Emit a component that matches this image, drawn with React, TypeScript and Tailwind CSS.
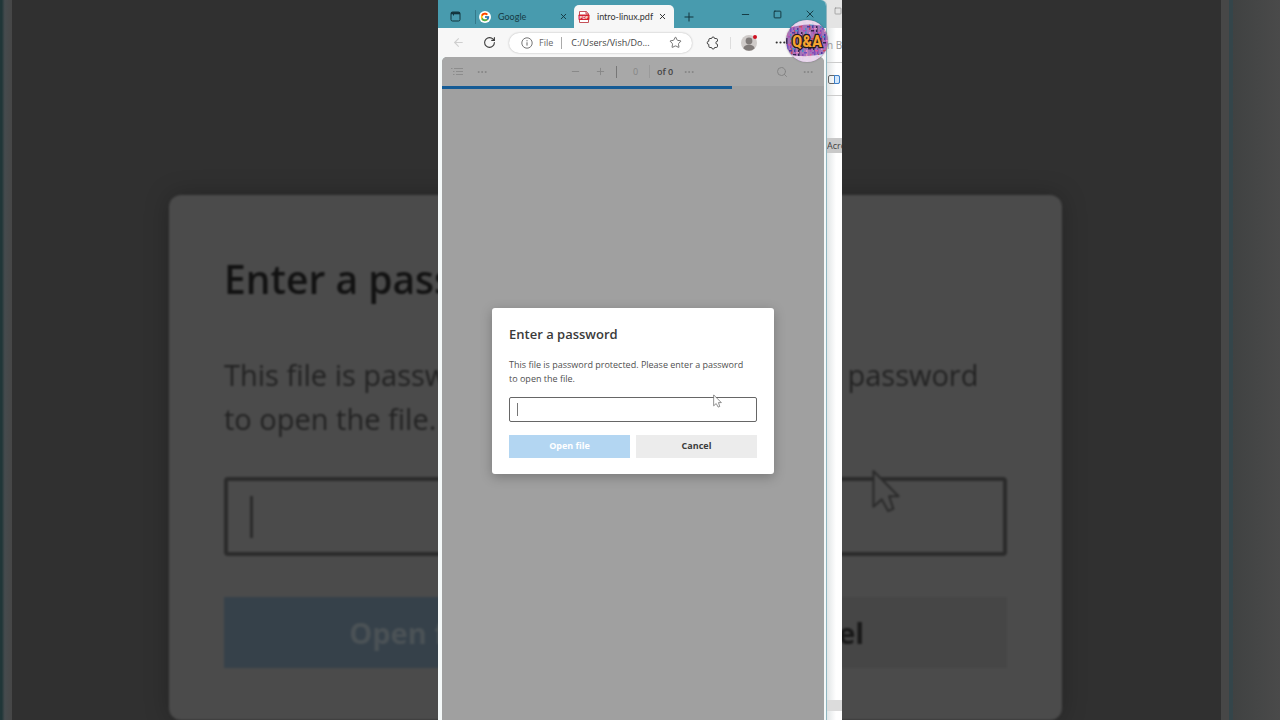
import { ArrowLeft, Minus, MoreHorizontal, Plus, RotateCw, Search, Square, Star, X } from "lucide-react";
import { FcGoogle } from "react-icons/fc";
import clsx from "clsx";

interface PasswordDialogProps {
  large?: boolean;
}

function Pointer({ className }: { className: string }) {
  return (
    <svg className={className} viewBox="0 0 14 21" fill="currentColor" stroke="#555" aria-hidden="true">
      <path d="M1 1 L1 18 L5 14.5 L8 20 L10.5 19 L8.5 13 L13 13 Z" strokeLinejoin="round" />
    </svg>
  );
}

function PasswordDialog({ large = false }: PasswordDialogProps) {
  const id = large ? "password-large" : "password";

  return (
    <form
      className={clsx(
        "w-full",
        large
          ? "rounded-xl bg-[#4b4b4b] px-[55px] pt-14 pb-[52px] shadow-[0_0_24px_rgba(0,0,0,0.25)] blur-[1px]"
          : "rounded-[3px] bg-white px-[17px] pt-[17px] pb-4 shadow-[0_3px_12px_rgba(0,0,0,0.25)]",
      )}
    >
      <h2
        className={clsx(
          "font-semibold whitespace-nowrap",
          large ? "text-[39px] leading-[56px] text-[#121212]" : "text-[13px] leading-[18px] text-[#3a3a3a]",
        )}
      >
        Enter a password
      </h2>
      <label
        htmlFor={id}
        className={clsx(
          "block whitespace-nowrap",
          large ? "mt-[46px] text-[29px] leading-[44px] text-[#222]" : "mt-[15px] text-[9px] leading-[14px] text-[#505050]",
        )}
      >
        This file is password protected. Please enter a password
        <br />
        to open the file.
      </label>
      <div
        className={clsx(
          "relative flex items-center",
          large
            ? "mt-9 h-[79px] rounded-[4px] border-4 border-[#2b2b2b] pl-[22px]"
            : "mt-[11px] h-[25px] rounded-[2px] border border-[#666] pl-[7px]",
        )}
      >
        <span className={large ? "h-[42px] w-[3px] bg-[#2b2b2b]" : "h-[13px] w-px bg-[#777]"} />
        <input id={id} type="password" className="h-full min-w-0 flex-1 bg-transparent outline-none" />
        {/* Mouse pointer over the field */}
        <Pointer
          className={
            large
              ? "absolute -top-3 right-[102px] h-[44px] w-[30px] text-[#4b4b4b] [stroke:#2b2b2b]"
              : "absolute -top-1 right-[34px] h-[14px] w-[9px] text-white"
          }
        />
      </div>
      <div
        className={clsx(
          "grid grid-cols-2 font-bold",
          large ? "mt-[41px] gap-5 text-[29px]" : "mt-[13px] gap-1.5 text-[9px]",
        )}
      >
        <button
          type="submit"
          className={large ? "h-[71px] bg-[#36414a] text-[#4b5256]" : "h-[23px] bg-[#b3d6f2] text-white"}
        >
          Open file
        </button>
        <button
          type="button"
          className={large ? "h-[71px] bg-[#464646] text-[#181818]" : "h-[23px] bg-[#ececec] text-[#3c3c3c]"}
        >
          Cancel
        </button>
      </div>
    </form>
  );
}

function Backdrop() {
  return (
    <div className="col-start-1 row-start-1 flex h-full overflow-hidden" aria-hidden="true">
      <div className="w-3 bg-linear-to-r from-[#203638] from-15% via-[#464b4e] via-40% to-[#464646]" />
      <div className="flex flex-1 items-start bg-[#303030] pt-[195px] pr-[159px] pl-[157px]">
        <PasswordDialog large />
      </div>
      <div className="w-2 bg-[#474747]" />
      <div className="w-1 bg-[#34454a]" />
      <div className="w-[47px] bg-linear-to-r from-[#404242] to-[#4a4a4a]" />
    </div>
  );
}

function TabMenuIcon() {
  return (
    <svg className="size-[11px]" viewBox="0 0 11 11" fill="none" stroke="#12343c" aria-hidden="true">
      <rect x="1" y="1" width="9" height="9" rx="1.5" />
      <path d="M1 2.2h9" strokeWidth="2.2" />
      <path d="M3.5 3v1.5" />
    </svg>
  );
}

function PdfIcon() {
  return (
    <svg className="size-3 shrink-0" viewBox="0 0 12 12" aria-hidden="true">
      <path d="M1.5.5h7L10.5 3v8.5h-9z" fill="#fff" stroke="#c5525a" />
      <path d="M8 .5V3h2.5" fill="none" stroke="#c5424a" />
      <rect x=".5" y="3.5" width="11" height="5.5" rx=".7" fill="#d4232f" />
      <text x="6" y="7.9" textAnchor="middle" fontSize="4.5" fontWeight="700" fill="#fff">
        PDF
      </text>
    </svg>
  );
}

function TitleBar() {
  return (
    <header className="flex h-7 items-end bg-[#489bae] pr-2.5 pl-3 font-['Lato','Open_Sans',sans-serif] text-[9px]">
      <button type="button" aria-label="Tab actions" className="flex h-[23px] items-center">
        <TabMenuIcon />
      </button>
      <div className="ml-3.5 flex h-[23px] w-[93px] items-center">
        <span className="h-3.5 w-px bg-[#34798a]" />
        <span className="ml-[3px] flex size-3 items-center justify-center rounded-full bg-white">
          <FcGoogle className="size-2.5" />
        </span>
        <span className="ml-[7px] text-[#163a43]">Google</span>
        <button type="button" aria-label="Close Google tab" className="ml-auto">
          <X className="size-[9px] text-[#12343c]" strokeWidth={2.4} />
        </button>
      </div>
      <div className="ml-1.5 flex h-[23px] w-[100px] items-center rounded-t-[5px] bg-[#f7f7f7] pr-[7px] pl-1">
        <PdfIcon />
        <span className="ml-[7px] whitespace-nowrap text-[#333]">intro-linux.pdf</span>
        <button type="button" aria-label="Close intro-linux.pdf tab" className="ml-auto">
          <X className="size-[9px] text-[#222]" strokeWidth={2.4} />
        </button>
      </div>
      <button type="button" aria-label="New tab" className="ml-2 flex h-[23px] items-center">
        <Plus className="size-3.5 text-[#12343c]" strokeWidth={1.7} />
      </button>
      <div className="ml-auto flex h-7 items-center gap-[22px] text-[#12343c]">
        <button type="button" aria-label="Minimize">
          <Minus className="size-[11px]" strokeWidth={2} />
        </button>
        <button type="button" aria-label="Maximize">
          <Square className="size-[9px]" strokeWidth={2.5} />
        </button>
        <button type="button" aria-label="Close">
          <X className="size-3" strokeWidth={1.8} />
        </button>
      </div>
    </header>
  );
}

function AddressBar() {
  return (
    <nav className="flex h-[29px] items-center bg-[#f7f7f7] pr-[39px] pl-3.5">
      <button type="button" aria-label="Back">
        <ArrowLeft className="size-[13px] text-[#cfcfcf]" strokeWidth={2} />
      </button>
      <button type="button" aria-label="Refresh" className="ml-[18px]">
        <RotateCw className="size-[13px] text-[#3a3a3a]" strokeWidth={2} />
      </button>
      <div className="ml-[13px] flex h-5 w-[183px] items-center rounded-full bg-white pr-2.5 pl-3 text-[9px] text-[#444] shadow-[0_0_2px_rgba(0,0,0,0.3)]">
        <svg className="size-3" viewBox="0 0 12 12" fill="none" stroke="#666" aria-hidden="true">
          <circle cx="6" cy="6" r="5.2" strokeWidth=".9" />
          <path d="M6 5.3v3.3M6 3.2v1.1" />
        </svg>
        <span className="ml-1.5 text-[#666]">File</span>
        <span className="ml-2 h-3 w-px bg-[#aaa]" />
        <input
          aria-label="Address"
          readOnly
          value="C:/Users/Vish/Do..."
          className="ml-[9px] min-w-0 flex-1 bg-transparent outline-none"
        />
        <button type="button" aria-label="Add to favorites">
          <Star className="size-[13px] text-[#666]" strokeWidth={1.7} />
        </button>
      </div>
      <button type="button" aria-label="Extensions" className="ml-3.5">
        <svg className="size-3.5" viewBox="0 0 14 14" fill="none" stroke="#444" strokeLinejoin="round" aria-hidden="true">
          <path d="M4 2.5h1.6a1.5 1.5 0 0 1 3 0h1.6q1.3 0 1.3 1.3v1.4a1.6 1.6 0 0 0 0 3.2v1.8q0 1.3-1.3 1.3H8.6a1.5 1.5 0 0 1-3 0H4q-1.2 0-1.2-1.3V8.4a1.6 1.6 0 0 1 0-3.2V3.8Q2.8 2.5 4 2.5z" />
        </svg>
      </button>
      <span className="ml-2.5 h-3 w-px bg-[#ddd]" />
      <button type="button" aria-label="Profile" className="relative ml-2.5">
        <svg className="size-4" viewBox="0 0 16 16" aria-hidden="true">
          <circle cx="8" cy="8" r="8" fill="#cfcbc9" />
          <circle cx="8" cy="6" r="3.4" fill="#807b79" />
          <path d="M2.5 13.5c0-5 11-5 11 0a8 8 0 0 1-11 0z" fill="#807b79" />
        </svg>
        <span className="absolute top-0 right-0 size-1 rounded-full bg-[#cf1020]" />
      </button>
      <button type="button" aria-label="Settings and more" className="ml-auto">
        <MoreHorizontal className="size-[13px] text-[#333]" />
      </button>
    </nav>
  );
}

function PdfToolbar() {
  return (
    <div className="flex h-[29px] items-center pr-2.5 pl-[9px] text-[9px] text-[#858585]">
      <div className="flex items-center gap-[13px]">
        <button type="button" aria-label="Contents">
          <svg className="size-3" viewBox="0 0 12 12" fill="none" stroke="currentColor" strokeWidth=".8" aria-hidden="true">
            <path d="M0 2.5h1.5M3 2.5h9M2 5.5h1.5M5 5.5h7M2 8.5h1.5M5 8.5h7" />
          </svg>
        </button>
        <button type="button" aria-label="More tools">
          <MoreHorizontal className="size-3" />
        </button>
      </div>
      <div className="ml-[82px] flex items-center">
        <button type="button" aria-label="Zoom out">
          <Minus className="size-[11px]" />
        </button>
        <button type="button" aria-label="Zoom in" className="ml-3.5">
          <Plus className="size-[11px]" />
        </button>
        <span className="ml-2.5 h-3 w-px bg-[#777]" />
        <input
          aria-label="Page number"
          readOnly
          value="0"
          className="ml-[5px] w-7 border-r border-[#9a9a9a] bg-transparent text-center outline-none"
        />
        <span className="ml-[7px] font-semibold text-[#444]">of 0</span>
        <button type="button" aria-label="More page options" className="ml-2.5">
          <MoreHorizontal className="size-3" />
        </button>
      </div>
      <div className="ml-auto flex items-center gap-3.5">
        <button type="button" aria-label="Find">
          <Search className="size-3" />
        </button>
        <button type="button" aria-label="Settings">
          <MoreHorizontal className="size-3" />
        </button>
      </div>
    </div>
  );
}

function ChannelBadge() {
  const colors = ["#b04fb8", "#4b3aa0", "#d9559f", "#6f4fc0", "#35244f", "#4a8fc4", "#c24a62", "#8a49b5", "#e38ac0"];
  const blocks = Array.from({ length: 110 }, (_, i) => ({
    x: (i * 17 + Math.floor(i / 6) * 5) % 42,
    y: Math.floor(i / 6) * 2 + 2,
    width: i % 2 === 0 ? 1.5 : 3 + ((i * 5) % 5),
    height: i % 2 === 0 ? 6 : 1.5,
    fill: colors[(i * 7) % colors.length],
  }));

  return (
    <svg
      className="absolute top-5 right-3.5 size-[42px] rounded-full bg-[#a574b8] shadow-[0_0_2px_rgba(0,0,0,0.35)]"
      viewBox="0 0 42 42"
      role="img"
      aria-label="Q&A"
    >
      {blocks.map((block, i) => (
        <rect key={i} {...block} />
      ))}
      <path d="M0 0h42v7Q21 1 0 9zM0 34q21 5 42-1v9H0z" fill="#f4eaf5" fillOpacity=".85" />
      <text
        x="21"
        y="27"
        textAnchor="middle"
        className="font-['Roboto_Condensed','Roboto',sans-serif] text-[17px] font-bold"
        fill="#f5a331"
        stroke="#241a20"
        strokeWidth="2.5"
        paintOrder="stroke"
      >
        Q&amp;A
      </text>
    </svg>
  );
}

function BrowserWindow() {
  return (
    <section className="flex min-w-0 flex-1 flex-col overflow-hidden rounded-tr-md border-r border-[#8fb6c0] bg-[#f4f8f8]">
      <TitleBar />
      <AddressBar />
      <main className="mr-0.5 ml-1 flex flex-1 flex-col overflow-hidden rounded-t-[5px] bg-[#a0a0a0]">
        <div className="bg-[#a8a8a8]">
          <PdfToolbar />
          <div className="h-[3px] bg-[#a0a0a0]">
            <div className="h-full w-[76%] bg-[#155b95]" />
          </div>
        </div>
        <div className="flex flex-1 items-center px-[50px] pb-7">
          <PasswordDialog />
        </div>
      </main>
    </section>
  );
}

/* Sliver of the window that sits behind the browser */
function RearWindow() {
  return (
    <aside className="flex w-[15px] flex-col overflow-hidden bg-linear-to-r from-[#e2e6e7] to-white to-60% text-[9px] whitespace-nowrap">
      <div className="flex h-7 items-center bg-[#e4e4e4] pb-1.5 pl-[7px]">
        <Square className="size-2 shrink-0 text-[#888]" />
      </div>
      <div className="flex h-[35px] items-center border-b border-[#ccc] text-[10px] text-[#999]">n B</div>
      <div className="flex h-[33px] items-center border-b border-[#ccc] pl-px">
        <svg className="h-[9px] w-3 shrink-0" viewBox="0 0 12 9" fill="none" aria-hidden="true">
          <rect x=".5" y=".5" width="11" height="8" rx="1.5" stroke="#666" />
          <path d="M6.5.5H10A1.5 1.5 0 0 1 11.5 2v5A1.5 1.5 0 0 1 10 8.5H6.5z" fill="#d5e8fb" stroke="#3c7fc8" />
        </svg>
      </div>
      <div className="mt-[42px] h-[15px] bg-[#c9c9c9] leading-[15px] text-[#444]">Acro</div>
      <div className="mt-auto mb-[9px] h-[11px] bg-[#dcdcdc]" />
    </aside>
  );
}

export default function App() {
  return (
    <div className="grid h-screen grid-cols-1 grid-rows-1 overflow-hidden bg-[#303030] font-['Open_Sans','Noto_Sans',sans-serif]">
      <Backdrop />
      <div className="relative col-start-1 row-start-1 flex aspect-[101/180] h-full justify-self-center overflow-hidden bg-[#dfe3e3]">
        <BrowserWindow />
        <RearWindow />
        <ChannelBadge />
      </div>
    </div>
  );
}
